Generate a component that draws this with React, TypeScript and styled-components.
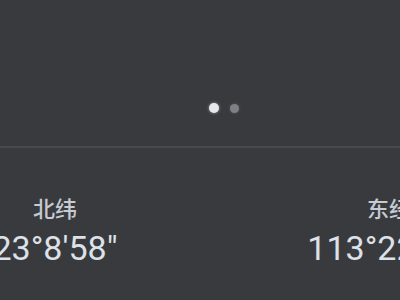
import React from "react";
import styled, { createGlobalStyle } from "styled-components";

const Global = createGlobalStyle`
  html, body { margin: 0; padding: 0; background: #393a3e; }
  body { font-family: Roboto, "Noto Sans CJK SC", sans-serif; }
`;

const Screen = styled.div`
  width: 400px;
  height: 300px;
  overflow: hidden;
  background: #393a3e;
`;

const Wide = styled.div`
  width: 668px;
  margin-left: -112px;
  display: flex;
  flex-direction: column;
`;

const Top = styled.div`
  height: 146px;
  display: flex;
  align-items: flex-end;
  justify-content: center;
  gap: 11px;
  padding-bottom: 33px;
  padding-left: 4px;
  box-sizing: border-box;
`;

const Dot = styled.span<{ $active?: boolean }>`
  width: ${(p) => (p.$active ? 10 : 9)}px;
  height: ${(p) => (p.$active ? 10 : 9)}px;
  border-radius: 50%;
  background: ${(p) => (p.$active ? "#e6e8ee" : "#7e8088")};
  box-shadow: 0 0 3px ${(p) => (p.$active ? "rgba(230,232,238,0.6)" : "rgba(126,128,136,0.5)")};
`;

const Divider = styled.div`
  height: 2px;
  background: #48494e;
`;

const Info = styled.div`
  display: grid;
  grid-template-columns: 1fr 1fr;
  padding-top: 45px;
`;

const Col = styled.div`
  display: flex;
  flex-direction: column;
  align-items: center;
`;

const Label = styled.div`
  font-family: "Noto Sans CJK SC", sans-serif;
  font-size: 22px;
  font-weight: 500;
  line-height: 28px;
  color: #c5cad3;
`;

const Value = styled.div`
  font-family: Roboto, sans-serif;
  font-size: 34px;
  line-height: 42px;
  color: #dde1e8;
  margin-top: 6px;
  white-space: nowrap;
`;

export default function App() {
  return (
    <Screen>
      <Global />
      <Wide>
        <Top>
          <Dot $active />
          <Dot />
        </Top>
        <Divider />
        <Info>
          <Col>
            <Label>北纬</Label>
            <Value>23°8'58"</Value>
          </Col>
          <Col>
            <Label>东经</Label>
            <Value>113°22'30"</Value>
          </Col>
        </Info>
      </Wide>
    </Screen>
  );
}
